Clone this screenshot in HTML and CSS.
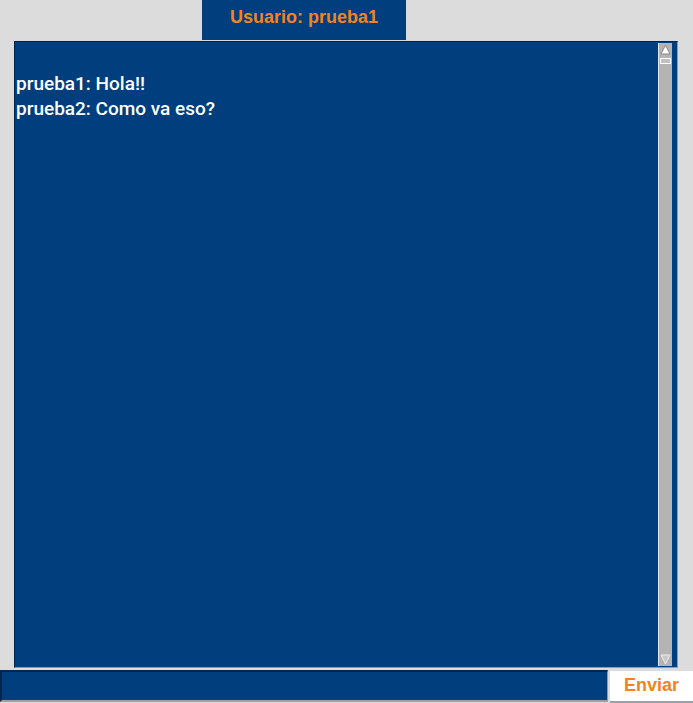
FILE: index.html
```html
<!DOCTYPE html>
<html lang="es">
<head>
<meta charset="utf-8">
<title>Chat</title>
<link rel="stylesheet" href="styles.css">
</head>
<body>
<div class="page">
  <div class="header-row">
    <div class="user-tab">Usuario: prueba1</div>
  </div>
  <div class="chat-row">
    <div class="chat-box">
      <div class="messages">
        <div class="msg">&nbsp;</div>
        <div class="msg">prueba1: Hola!!</div>
        <div class="msg">prueba2: Como va eso?</div>
      </div>
      <div class="scrollbar">
        <div class="sb-btn sb-up">
          <svg width="11" height="12" viewBox="0 0 11 12"><polygon points="5.5,1 1,10 10,10" fill="#fff" stroke="#888" stroke-width="1"/></svg>
        </div>
        <div class="sb-thumb"></div>
        <div class="sb-track"></div>
        <div class="sb-btn sb-down">
          <svg width="11" height="12" viewBox="0 0 11 12"><polygon points="1,2 10,2 5.5,11" fill="#c8c8c8" stroke="#eee" stroke-width="1"/></svg>
        </div>
      </div>
    </div>
  </div>
  <div class="input-row">
    <div class="msg-input"></div>
    <button class="send-btn">Enviar</button>
  </div>
</div>
</body>
</html>
```

FILE: styles.css
```css
html, body {
  margin: 0;
  padding: 0;
  background: #dcdcdc;
  height: 703px;
  overflow: hidden;
}
.page {
  display: flex;
  flex-direction: column;
  height: 703px;
}
.header-row {
  display: flex;
  padding-left: 202px;
  height: 40px;
}
.user-tab {
  width: 204px;
  height: 40px;
  background: #003e7e;
  color: #f5821f;
  font-family: "Liberation Sans", Arial, sans-serif;
  font-weight: bold;
  font-size: 18px;
  display: flex;
  align-items: center;
  justify-content: center;
  padding-bottom: 5px;
  box-sizing: border-box;
}
.chat-row {
  padding: 1px 15px 0 14px;
  height: 628px;
  box-sizing: border-box;
  margin-bottom: 2px;
}
.chat-box {
  height: 627px;
  background: #003e7e;
  border-top: 1px solid #00254d;
  border-left: 1px solid #00254d;
  border-right: 1px solid #7f9ec0;
  border-bottom: 1px solid #7f9ec0;
  box-sizing: border-box;
  display: flex;
  padding: 1px 5px 1px 1px;
}
.messages {
  flex: 1;
  color: #ffffff;
  font-family: Roboto, "Noto Sans", sans-serif;
  font-weight: 500;
  font-size: 19px;
  line-height: 25px;
  padding: 3px 0 0 0;
}
.scrollbar {
  width: 13px;
  background: #b4b4b4;
  display: flex;
  flex-direction: column;
  border-left: 1px solid #e8e8e8;
}
.sb-btn {
  height: 14px;
  display: flex;
  align-items: center;
  justify-content: center;
  background: #b4b4b4;
}
.sb-thumb {
  height: 4px;
  margin: 1px 1px;
  border: 1px solid #fff;
  background: #c0c0c0;
}
.sb-track {
  flex: 1;
}
.input-row {
  display: flex;
  gap: 2px;
  height: 33px;
}
.msg-input {
  width: 608px;
  height: 32px;
  background: #003e7e;
  border-top: 2px solid #00254d;
  border-left: 2px solid #00254d;
  border-right: 1px solid #7f9ec0;
  border-bottom: 2px solid #9aa0a8;
  box-sizing: border-box;
}
.send-btn {
  width: 83px;
  height: 32px;
  margin-top: 1px;
  background: #ffffff;
  color: #f5821f;
  font-family: "Liberation Sans", Arial, sans-serif;
  font-weight: bold;
  font-size: 18px;
  border: none;
  border-bottom: 2px solid #9aa0a8;
  padding: 0 0 2px 0;
  box-sizing: border-box;
}
```
